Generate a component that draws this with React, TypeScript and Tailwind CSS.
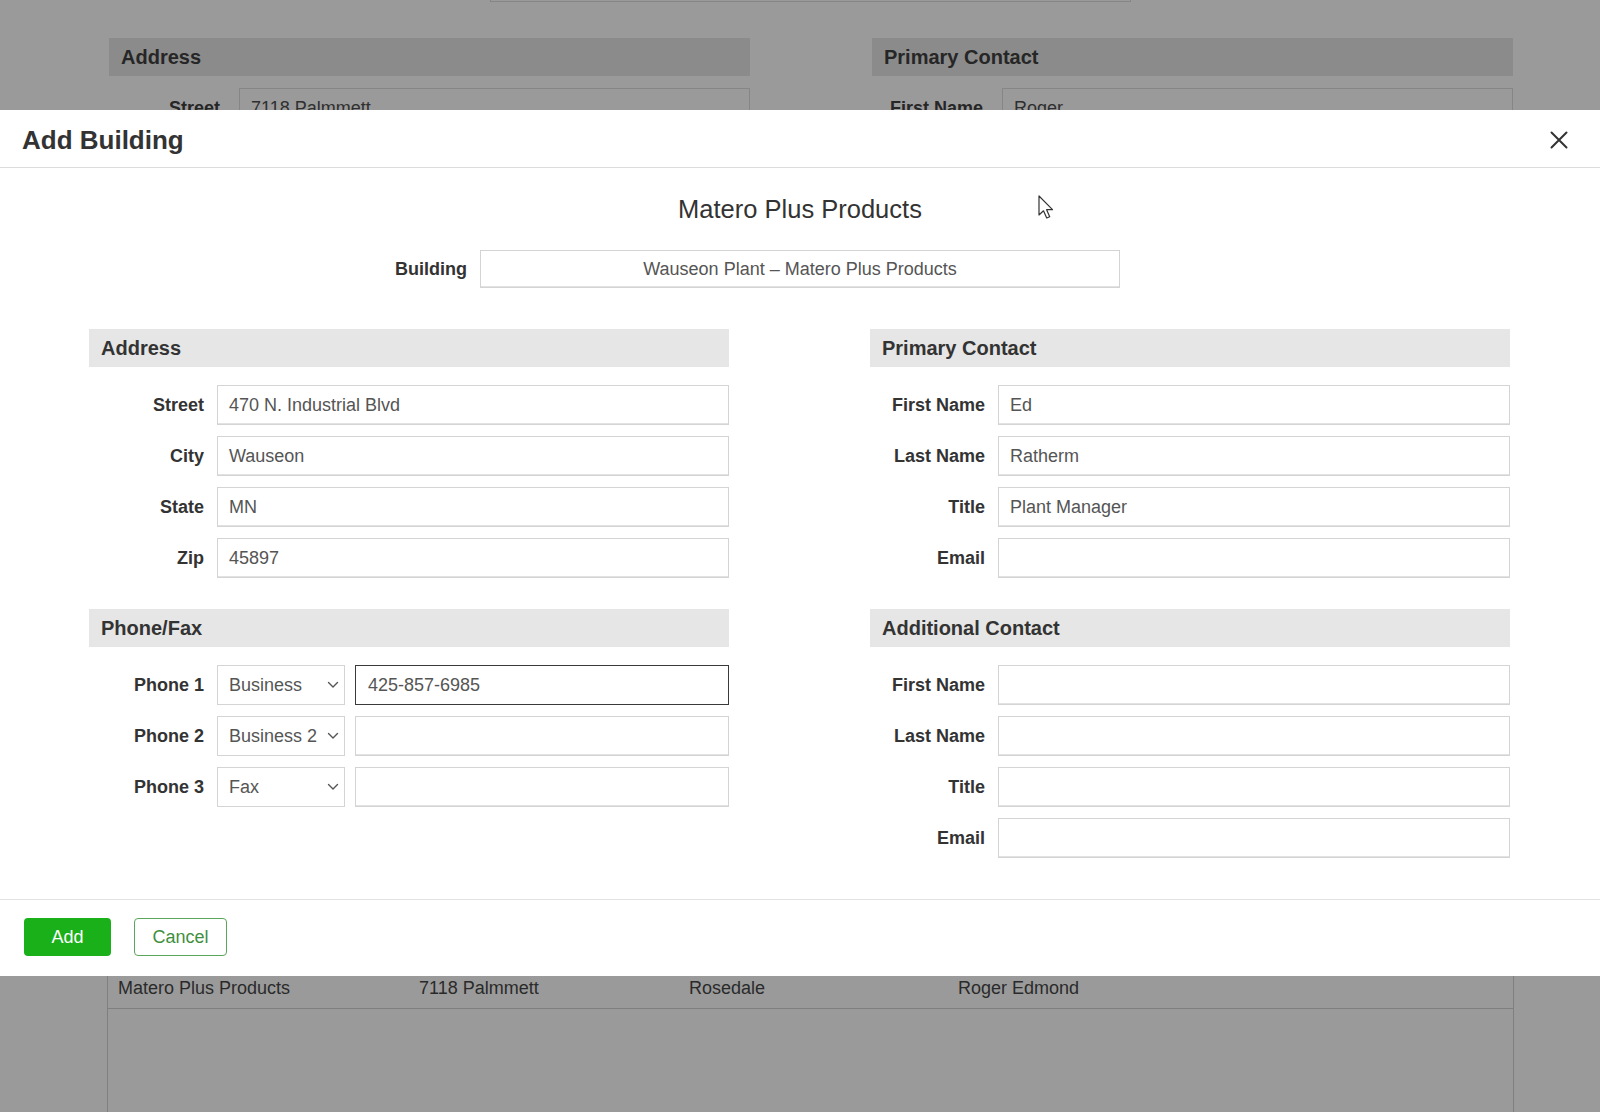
import React from "react";

const font = { fontFamily: '"Liberation Sans", Arial, sans-serif' };

function Field({ label, value = "" }: { label: string; value?: string }) {
  return (
    <div className="flex items-center gap-[13px]">
      <div className="w-[115px] shrink-0 text-right text-[18px] font-bold text-[#333]">{label}</div>
      <div className="flex h-[40px] flex-1 items-center border border-[#d4d4d4] bg-white px-[11px] text-[18px] text-[#555] shadow-[inset_0_-1px_0_#e2e2e2]">
        {value}
      </div>
    </div>
  );
}

function Chevron() {
  return (
    <svg width="12" height="8" viewBox="0 0 12 8" fill="none">
      <path d="M1.5 1.5 6 6l4.5-4.5" stroke="#555" strokeWidth="1.4" strokeLinecap="round" strokeLinejoin="round" />
    </svg>
  );
}

function PhoneRow({ label, kind, value = "", focused = false }: { label: string; kind: string; value?: string; focused?: boolean }) {
  return (
    <div className="flex items-center gap-[13px]">
      <div className="w-[115px] shrink-0 text-right text-[18px] font-bold text-[#333]">{label}</div>
      <div className="flex h-[40px] w-[128px] shrink-0 items-center justify-between border border-[#d4d4d4] bg-white pl-[11px] pr-[5px] text-[18px] text-[#555]">
        <span>{kind}</span>
        <Chevron />
      </div>
      <div
        className={
          focused
            ? "ml-[-3px] flex h-[40px] flex-1 items-center border-[1.5px] border-[#3a3a3a] bg-white px-[12px] text-[18px] text-[#555]"
            : "ml-[-3px] flex h-[40px] flex-1 items-center border border-[#d4d4d4] bg-white px-[12px] text-[18px] text-[#555] shadow-[inset_0_-1px_0_#e2e2e2]"
        }
      >
        {value}
      </div>
    </div>
  );
}

function SectionHeader({ title }: { title: string }) {
  return (
    <div className="flex h-[38px] items-center bg-[#e6e6e6] pl-[12px] text-[20px] font-bold text-[#333]">{title}</div>
  );
}

function BgColumn({ title, label, value }: { title: string; label: string; value: string }) {
  return (
    <div className="w-[641px]">
      <div className="flex h-[38px] items-center bg-[#8b8b8b] pl-[12px] text-[20px] font-bold text-[#262626]">{title}</div>
      <div className="mt-[12px] flex items-center gap-[19px]">
        <div className="w-[111px] text-right text-[18px] font-bold text-[#262626]">{label}</div>
        <div className="flex h-[40px] flex-1 items-center border border-[#868686] px-[11px] text-[18px] text-[#2f2f2f]">{value}</div>
      </div>
    </div>
  );
}

export default function App() {
  return (
    <div className="relative h-[1112px] w-full overflow-hidden bg-[#9a9a9a]" style={font}>
      {/* dimmed page behind the dialog */}
      <div className="ml-[490px] h-[2px] w-[641px] border-x border-b border-[#868686]" />
      <div className="ml-[109px] mt-[36px] flex gap-[122px]">
        <BgColumn title="Address" label="Street" value="7118 Palmmett" />
        <BgColumn title="Primary Contact" label="First Name" value="Roger" />
      </div>
      <div className="ml-[107px] mt-[841px] h-[200px] w-[1407px] border-x border-[#7f7f7f]">
        <div className="grid h-[40px] grid-cols-[301px_270px_269px_1fr] items-center border-b border-[#7f7f7f] pl-[10px] text-[18px] text-[#2a2a2a]">
          <span>Matero Plus Products</span>
          <span>7118 Palmmett</span>
          <span>Rosedale</span>
          <span>Roger Edmond</span>
        </div>
      </div>

      {/* dialog */}
      <div className="absolute left-0 top-[110px] flex h-[866px] w-full flex-col bg-white">
        <div className="flex h-[58px] shrink-0 items-center justify-between border-b border-[#dcdcdc] pl-[22px] pr-[32px] pt-[3px]">
          <h1 className="text-[26px] font-bold text-[#333]">Add Building</h1>
          <svg width="18" height="18" viewBox="0 0 18 18" fill="none">
            <path d="M1.5 1.5l15 15M16.5 1.5l-15 15" stroke="#333" strokeWidth="2" strokeLinecap="round" />
          </svg>
        </div>

        <div className="h-[731px] shrink-0 pt-[26px]">
          <div className="text-center text-[25.5px] leading-[30px] text-[#333]">Matero Plus Products</div>
          <div className="mt-[26px] grid grid-cols-[1fr_640px_1fr] items-center">
            <div className="justify-self-end pr-[13px] text-[18px] font-bold text-[#333]">Building</div>
            <div className="flex h-[38px] items-center justify-center border border-[#d4d4d4] text-[18px] text-[#555] shadow-[inset_0_-1px_0_#e2e2e2]">
              Wauseon Plant – Matero Plus Products
            </div>
            <div />
          </div>

          <div className="mt-[41px] grid grid-cols-[640px_640px] gap-x-[141px] pl-[89px]">
            <div>
              <SectionHeader title="Address" />
              <div className="mt-[18px] flex flex-col gap-[11px]">
                <Field label="Street" value="470 N. Industrial Blvd" />
                <Field label="City" value="Wauseon" />
                <Field label="State" value="MN" />
                <Field label="Zip" value="45897" />
              </div>
              <div className="mt-[31px]">
                <SectionHeader title="Phone/Fax" />
              </div>
              <div className="mt-[18px] flex flex-col gap-[11px]">
                <PhoneRow label="Phone 1" kind="Business" value="425-857-6985" focused />
                <PhoneRow label="Phone 2" kind="Business 2" />
                <PhoneRow label="Phone 3" kind="Fax" />
              </div>
            </div>
            <div>
              <SectionHeader title="Primary Contact" />
              <div className="mt-[18px] flex flex-col gap-[11px]">
                <Field label="First Name" value="Ed" />
                <Field label="Last Name" value="Ratherm" />
                <Field label="Title" value="Plant Manager" />
                <Field label="Email" />
              </div>
              <div className="mt-[31px]">
                <SectionHeader title="Additional Contact" />
              </div>
              <div className="mt-[18px] flex flex-col gap-[11px]">
                <Field label="First Name" />
                <Field label="Last Name" />
                <Field label="Title" />
                <Field label="Email" />
              </div>
            </div>
          </div>
        </div>

        <div className="flex flex-1 items-start gap-[23px] border-t border-[#e2e2e2] pl-[24px] pt-[18px]">
          <button className="h-[38px] w-[87px] rounded-[4px] bg-[#19b019] text-[18px] text-white">Add</button>
          <button className="h-[38px] w-[93px] rounded-[4px] border-[1.5px] border-[#5aa65a] bg-white text-[18px] text-[#3f8f3f]">
            Cancel
          </button>
        </div>
      </div>

      {/* mouse pointer */}
      <svg className="absolute left-[1038px] top-[195px]" width="16" height="26" viewBox="0 0 16 26" fill="none">
        <path d="M1 1v19l4.5-4.2 3.2 7.2 3-1.3-3.1-7H14.5Z" fill="#fff" stroke="#333" strokeWidth="1.2" strokeLinejoin="round" />
      </svg>
    </div>
  );
}
